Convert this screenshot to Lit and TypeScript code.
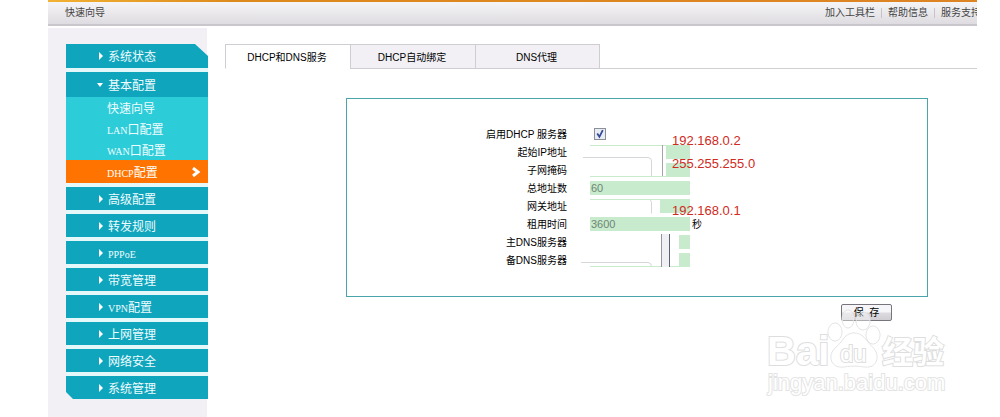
import { css, html, LitElement, svg } from 'lit';
import { customElement, property, state } from 'lit/decorators.js';

interface MenuItem {
  latin?: string;
  text: string;
  children?: MenuItem[];
}

const MENU: MenuItem[] = [
  { text: '系统状态' },
  {
    text: '基本配置',
    children: [
      { text: '快速向导' },
      { latin: 'LAN', text: '口配置' },
      { latin: 'WAN', text: '口配置' },
      { latin: 'DHCP', text: '配置' },
    ],
  },
  { text: '高级配置' },
  { text: '转发规则' },
  { latin: 'PPPoE', text: '' },
  { text: '带宽管理' },
  { latin: 'VPN', text: '配置' },
  { text: '上网管理' },
  { text: '网络安全' },
  { text: '系统管理' },
];

const TABS = ['DHCP和DNS服务', 'DHCP自动绑定', 'DNS代理'];

@customElement('side-menu')
export class SideMenu extends LitElement {
  @property() active = 'DHCP配置';

  static styles = css`
    :host {
      display: block;
    }

    ul {
      list-style: none;
      margin: 0;
      padding: 0;
    }

    a {
      display: flex;
      align-items: center;
      color: #effcfd;
      text-decoration: none;
      white-space: nowrap;
    }

    .item {
      border-bottom: 4px solid #e4f8fa;
    }

    .item:last-child {
      border-bottom: 0;
    }

    .item > a {
      height: 23px;
      padding-left: 33px;
      background: #0fa6bd;
    }

    .item:first-child > a {
      height: 24px;
      clip-path: polygon(0 0, calc(100% - 13px) 0, 100% 12px, 100% 100%, 0 100%);
    }

    .item.open > a {
      height: 25px;
      padding-left: 31px;
    }

    .item:last-child > a {
      clip-path: polygon(0 0, 100% 0, 100% 100%, 7px 100%, 0 calc(100% - 7px));
    }

    .arrow {
      width: 4px;
      height: 8px;
      margin-right: 5px;
      fill: #fff;
    }

    .open .arrow {
      width: 6px;
      height: 4px;
    }

    .sub {
      background: #2dccd9;
    }

    .sub a {
      height: 21px;
      padding-left: 41px;
    }

    .sub .active {
      height: 23px;
      padding-right: 7px;
      justify-content: space-between;
      background: #ff7300;
      color: #fff;
    }

    .chevron {
      width: 9px;
      height: 10px;
      fill: none;
      stroke: #fff;
      stroke-width: 3;
    }

    .latin {
      font: 10px 'Liberation Serif', serif;
    }
  `;

  render() {
    return html`
      <nav>
        <ul>
          ${MENU.map((item) => this.renderItem(item))}
        </ul>
      </nav>
    `;
  }

  private renderLabel(item: MenuItem) {
    return html`<span
      >${item.latin ? html`<span class="latin">${item.latin}</span>` : ''}${item.text}</span
    >`;
  }

  private renderItem(item: MenuItem) {
    return html`
      <li class="item ${item.children ? 'open' : ''}">
        <a href="#">
          ${item.children
            ? html`<svg class="arrow" viewBox="0 0 6 4"><path d="M0 0h6L3 4z" /></svg>`
            : html`<svg class="arrow" viewBox="0 0 4 8"><path d="M0 0l4 4-4 4z" /></svg>`}
          ${this.renderLabel(item)}
        </a>
        ${item.children
          ? html`<ul class="sub">
              ${item.children.map((child) => this.renderChild(child))}
            </ul>`
          : ''}
      </li>
    `;
  }

  private renderChild(item: MenuItem) {
    const active = (item.latin ?? '') + item.text === this.active;
    return html`
      <li>
        <a href="#" class="${active ? 'active' : ''}">
          ${this.renderLabel(item)}
          ${active
            ? html`<svg class="chevron" viewBox="0 0 9 10"><path d="M1 1l5 4-5 4" /></svg>`
            : ''}
        </a>
      </li>
    `;
  }
}

@customElement('dhcp-form')
export class DhcpForm extends LitElement {
  static styles = css`
    :host {
      display: block;
    }

    .panel {
      position: relative;
      border: 1px solid #4aa5aa;
      padding: 25px 0 27px;
    }

    .row {
      display: grid;
      grid-template-columns: 220px 100px auto;
      column-gap: 23px;
      align-items: center;
      height: 18px;
    }

    .row:first-child {
      height: 19px;
    }

    label,
    .unit {
      padding-top: 2px;
      color: #000;
      white-space: nowrap;
    }

    label {
      text-align: right;
    }

    input[type='text'] {
      box-sizing: border-box;
      width: 100px;
      height: 14px;
      padding: 0 1px;
      border: 0;
      border-radius: 0;
      background: #c8ebcd;
      color: #6f8573;
      font: 11px 'Liberation Sans', sans-serif;
    }

    input[type='checkbox'] {
      appearance: none;
      box-sizing: border-box;
      width: 12px;
      height: 12px;
      margin: 0 4px;
      border: 1px solid #8b8f96;
      background: #e9ecf2;
    }

    input[type='checkbox']:checked {
      background: #e9ecf2
        url("data:image/svg+xml,%3Csvg xmlns='http://www.w3.org/2000/svg' viewBox='0 0 9 9'%3E%3Cpath d='M2 4l2 3 3-6' fill='none' stroke='%23344a9a' stroke-width='1.6'/%3E%3C/svg%3E");
    }

    .unit {
      margin-left: -21px;
    }

    .marks {
      position: absolute;
      left: 0;
      top: 0;
      width: 100%;
      height: 100%;
      pointer-events: none;
    }

    .mask {
      fill: #fff;
    }

    .edge {
      fill: none;
      stroke: #d5d7da;
    }

    .note {
      fill: #d02a22;
      font: 13px 'Liberation Sans', sans-serif;
    }

    .actions {
      display: flex;
      justify-content: flex-end;
      padding: 7px 36px 0 0;
    }

    button {
      width: 51px;
      height: 17px;
      padding: 0;
      border: 1px solid #77757b;
      border-radius: 2px;
      background: linear-gradient(#f6f5f7 45%, #dcdadf 55%, #d0ced3);
      color: #000;
      font: inherit;
      line-height: 14px;
    }
  `;

  render() {
    return html`
      <form @submit="${this.handleSubmit}">
        <div class="panel">
          <div class="rows">
            <div class="row">
              <label for="enable">启用DHCP 服务器</label>
              <input id="enable" type="checkbox" checked />
            </div>
            ${this.renderRow('start', '起始IP地址')}
            ${this.renderRow('mask', '子网掩码')}
            ${this.renderRow('total', '总地址数', '60')}
            ${this.renderRow('gateway', '网关地址')}
            ${this.renderRow('lease', '租用时间', '3600', '秒')}
            ${this.renderRow('dns1', '主DNS服务器')}
            ${this.renderRow('dns2', '备DNS服务器')}
          </div>
          ${this.renderMarks()}
        </div>
        <div class="actions"><button type="submit">保&nbsp; 存</button></div>
      </form>
    `;
  }

  private renderRow(id: string, label: string, value = '', unit = '') {
    return html`
      <div class="row">
        <label for="${id}">${label}</label>
        <input id="${id}" type="text" .value="${value}" />
        ${unit ? html`<span class="unit">${unit}</span>` : ''}
      </div>
    `;
  }

  // Blanked-out field areas and the red address notes written over them.
  private renderMarks() {
    const notes = [
      { y: 46, text: '192.168.0.2' },
      { y: 69, text: '255.255.255.0' },
      { y: 116, text: '192.168.0.1' },
    ];
    return html`
      <svg class="marks">
        <g shape-rendering="crispEdges">
          <rect class="mask" x="243" y="47" width="76" height="30" />
          <rect class="mask" x="243" y="101" width="70" height="13" />
          <rect class="mask" x="243" y="135" width="89" height="32" />
          <rect x="315" y="46" width="1" height="31" fill="#a5a5a8" />
          <rect x="314" y="135" width="9" height="33" fill="#f0eff4" />
          <rect x="314" y="135" width="1" height="33" fill="#97979b" />
          <rect x="322" y="135" width="1" height="33" fill="#5c6076" />
        </g>
        <path class="edge" d="M236 58.500h65q3.500 0 3.500 3.500v15" />
        <path class="edge" d="M303 101.500q1.500 0 1.500 2v11" />
        <path class="edge" d="M234 163.500h67q3.500 0 3.500 4" />
        ${notes.map(
          (note) => svg`<text class="note" x="325" y="${note.y}">${note.text}</text>`
        )}
      </svg>
    `;
  }

  private handleSubmit(event: Event) {
    event.preventDefault();
  }
}

@customElement('app-root')
export class AppRoot extends LitElement {
  @state() private tab = 0;

  static styles = css`
    :host {
      display: block;
      position: relative;
      overflow: hidden;
      padding: 0 23px 0 48px;
      background: #fff;
      color: #111;
      font: 10px/16px 'Liberation Sans', 'Noto Sans CJK SC', sans-serif;
    }

    .page {
      display: flex;
      flex-direction: column;
      min-height: 100vh;
    }

    .stripe {
      height: 2px;
      background: linear-gradient(90deg, #f2b233, #dd8a1c 20%, #dd8425);
    }

    header {
      display: flex;
      justify-content: space-between;
      align-items: center;
      height: 22px;
      padding-left: 17px;
      overflow: hidden;
      border-bottom: 2px solid #c9c7cb;
      background: linear-gradient(#f5f4f6, #dedce0);
      color: #444;
      white-space: nowrap;
    }

    header nav {
      display: flex;
      align-items: center;
      margin-right: -4px;
    }

    header a {
      color: #444;
      text-decoration: none;
    }

    .divider {
      width: 1px;
      height: 10px;
      margin: 0 6px;
      background: #c6c4c9;
    }

    .body {
      display: flex;
      flex: 1;
      margin-top: 2px;
    }

    side-menu {
      width: 142px;
      padding: 16px 0 18px 18px;
      background: linear-gradient(90deg, #f2f0f4 159px, #fff 159px);
      font: 12px/18px 'Noto Sans CJK SC', sans-serif;
    }

    main {
      flex: 1;
      padding: 16px 0 0 17px;
    }

    .tabs {
      display: flex;
      border-bottom: 1px solid #d0cfd2;
    }

    .tab {
      width: 125px;
      height: 25px;
      margin-bottom: -1px;
      padding: 3px 2px 0 0;
      border: 1px solid #cfcdd1;
      border-right-width: 0;
      background: #f2f0f4;
      color: #000;
      font: inherit;
    }

    .tab:last-child {
      border-right-width: 1px;
    }

    .tab.selected {
      border-bottom-color: #fff;
      background: #fff;
    }

    dhcp-form {
      margin: 29px 49px 0 121px;
    }

    .watermark {
      position: absolute;
      right: 48px;
      top: 304px;
      width: 188px;
      height: 96px;
      fill: #fff;
      stroke: #dedede;
      stroke-width: 2;
      paint-order: stroke;
      pointer-events: none;
    }

    .paw {
      fill: rgba(255, 255, 255, 0.4);
      stroke-width: 1;
    }

    .brand {
      font: bold 40px 'Liberation Sans', sans-serif;
    }

    .brand-du {
      font: 24px 'Liberation Sans', sans-serif;
    }

    .brand-cn {
      font: bold 31px 'Noto Sans CJK SC', sans-serif;
    }

    .site {
      font: 22px 'Liberation Sans', sans-serif;
      stroke: #e4e4e4;
    }
  `;

  render() {
    return html`
      <div class="page">
        <div class="stripe"></div>
        <header>
          <span>快速向导</span>
          <nav>
            <a href="#">加入工具栏</a>
            <span class="divider"></span>
            <a href="#">帮助信息</a>
            <span class="divider"></span>
            <a href="#">服务支持</a>
          </nav>
        </header>
        <div class="body">
          <side-menu></side-menu>
          <main>
            <div class="tabs" role="tablist">
              ${TABS.map(
                (label, index) => html`
                  <button
                    class="tab ${index === this.tab ? 'selected' : ''}"
                    role="tab"
                    aria-selected="${index === this.tab}"
                    @click="${() => this.selectTab(index)}"
                  >
                    ${label}
                  </button>
                `
              )}
            </div>
            <dhcp-form></dhcp-form>
          </main>
        </div>
      </div>
      ${this.renderWatermark()}
    `;
  }

  private renderWatermark() {
    return html`
      <svg class="watermark" viewBox="0 0 188 96">
        <g class="paw">
          <ellipse cx="71" cy="28" rx="7" ry="9" />
          <ellipse cx="84" cy="15" rx="6" ry="9" />
          <ellipse cx="99" cy="17" rx="7" ry="9" />
          <ellipse cx="109" cy="31" rx="7" ry="9" />
          <path
            d="M90 29c7 0 11 5 14 9 4 5 9 8 9 15 0 6-4 10-10 10-5 0-8-1-13-1s-8 1-13 1c-6 0-10-4-10-10 0-7 6-10 10-15 3-4 6-9 13-9z"
          />
        </g>
        <text class="brand" x="3" y="61">Bai</text>
        <text class="brand-du" x="76" y="58">du</text>
        <text class="brand-cn" x="118" y="59">经验</text>
        <text class="site" x="4" y="86">jingyan.baidu.com</text>
      </svg>
    `;
  }

  private selectTab(index: number) {
    this.tab = index;
  }
}
